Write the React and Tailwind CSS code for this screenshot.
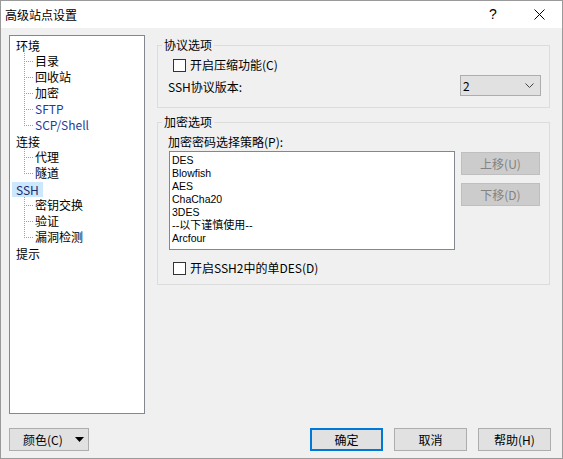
import React from 'react'

const tree = [
  { label: '环境', children: ['目录', '回收站', '加密', 'SFTP', 'SCP/Shell'] },
  { label: '连接', children: ['代理', '隧道'] },
  { label: 'SSH', selected: true, children: ['密钥交换', '验证', '漏洞检测'] },
  { label: '提示', children: [] },
]

const ciphers = ['DES', 'Blowfish', 'AES', 'ChaCha20', '3DES', '--以下谨慎使用--', 'Arcfour']

function CheckBox() {
  return <span className="block w-[13px] h-[13px] border border-[#333333] bg-white shrink-0" />
}

function Connector({ last }) {
  return (
    <svg width="25" height="16" className="shrink-0" shapeRendering="crispEdges">
      <line x1="14.5" y1="0" x2="14.5" y2={last ? 9 : 16} stroke="#a0a0a0" strokeDasharray="1 1" />
      <line x1="16" y1="8.5" x2="24" y2="8.5" stroke="#a0a0a0" strokeDasharray="1 1" />
    </svg>
  )
}

function TreeView() {
  return (
    <div className="w-[136px] h-[379px] border border-[#828790] bg-white pt-[1px]">
      {tree.map((node) => (
        <div key={node.label}>
          <div className="h-[16px] flex items-end">
            <span
              className={`ml-[2px] px-[4px] h-[15px] leading-[15px] text-[12px] ${
                node.selected ? 'bg-[#cce8ff] text-[#1b2a6b]' : ''
              }`}
            >
              {node.label}
            </span>
          </div>
          {node.children.map((child, i) => (
            <div key={child} className="h-[16px] flex items-center">
              <Connector last={i === node.children.length - 1} />
              <span
                className={`text-[12px] leading-[16px] ${
                  child === 'SFTP' || child === 'SCP/Shell' ? 'text-[#1e3c9c]' : ''
                }`}
              >
                {child}
              </span>
            </div>
          ))}
        </div>
      ))}
    </div>
  )
}

function Group({ title, className = '', children }) {
  return (
    <fieldset className={`border border-[#dcdcdc] w-[393px] ${className}`}>
      <legend className="ml-[4px] px-[2px] text-[12px] leading-[16px]">{title}</legend>
      {children}
    </fieldset>
  )
}

function Button({ children, disabled, primary, className = '' }) {
  return (
    <button
      className={`h-[23px] text-[12px] leading-[16px] flex items-center justify-center ${
        disabled
          ? 'bg-[#cccccc] border border-[#bfbfbf] text-[#838383]'
          : primary
          ? 'bg-[#e1e1e1] border-2 border-[#0078d7]'
          : 'bg-[#e1e1e1] border border-[#adadad]'
      } ${className}`}
    >
      {children}
    </button>
  )
}

export default function App() {
  return (
    <div className="w-[563px] h-[459px] flex flex-col border border-[#9a9a9a] bg-[#f0f0f0] text-black font-['Noto_Sans_CJK_SC',sans-serif] select-none">
      {/* title bar */}
      <div className="h-[27px] bg-white flex items-center shrink-0">
        <span className="pl-[4px] text-[12px] leading-[16px]">高级站点设置</span>
        <div className="ml-auto flex h-full">
          <div className="w-[46px] h-full flex items-center justify-center text-[14px] font-['Liberation_Sans',sans-serif]">?</div>
          <div className="w-[46px] h-full flex items-center justify-center">
            <svg width="11" height="11" viewBox="0 0 11 11">
              <path d="M0.5 0.5 L10.5 10.5 M10.5 0.5 L0.5 10.5" stroke="#000" strokeWidth="1" />
            </svg>
          </div>
        </div>
      </div>

      {/* body */}
      <div className="flex-1 flex flex-col pl-[8px] pr-[11px] pt-[7px] pb-[7px]">
        <div className="flex">
          <TreeView />

          <div className="ml-[12px] mt-[2px] flex flex-col">
            <Group title="协议选项">
              <div className="pl-[10px] pr-[8px] pt-[4px] pb-[11px]">
                <div className="h-[16px] flex items-center gap-[4px] ml-[5px]">
                  <CheckBox />
                  <span className="text-[12px] leading-[16px]">开启压缩功能(C)</span>
                </div>
                <div className="mt-[2px] h-[21px] flex items-center justify-between">
                  <span className="text-[12px] leading-[16px] mt-[3px]">SSH协议版本:</span>
                  <div className="w-[81px] h-[21px] bg-[#e1e1e1] border border-[#adadad] flex items-center justify-between pl-[2px] pr-[6px]">
                    <span className="text-[12px] leading-[16px]">2</span>
                    <svg width="9" height="5" viewBox="0 0 9 5">
                      <path d="M0.5 0.5 L4.5 4.5 L8.5 0.5" fill="none" stroke="#444" strokeWidth="1" />
                    </svg>
                  </div>
                </div>
              </div>
            </Group>

            <Group title="加密选项" className="mt-[6px]">
              <div className="pl-[10px] pr-[9px] pt-[4px] pb-[8px]">
                <div className="h-[16px] text-[12px] leading-[16px]">加密密码选择策略(P):</div>
                <div className="mt-[1px] flex">
                  <div className="ml-[1px] w-[286px] h-[99px] border border-[#828790] bg-white pl-[2px] pt-[2px] font-['Liberation_Sans','Noto_Sans_CJK_SC',sans-serif]">
                    {ciphers.map((c) => (
                      <div
                        key={c}
                        className={`h-[13px] leading-[13px] ${c.startsWith('--') ? 'text-[11px]' : 'text-[10.5px]'}`}
                      >
                        {c}
                      </div>
                    ))}
                  </div>
                  <div className="ml-[6px] mt-[1px] flex flex-col gap-[8px]">
                    <Button disabled className="w-[79px]">上移(U)</Button>
                    <Button disabled className="w-[79px]">下移(D)</Button>
                  </div>
                </div>
                <div className="mt-[10px] h-[16px] flex items-center gap-[4px] ml-[5px]">
                  <CheckBox />
                  <span className="text-[12px] leading-[16px]">开启SSH2中的单DES(D)</span>
                </div>
              </div>
            </Group>
          </div>
        </div>

        {/* footer buttons */}
        <div className="mt-[14px] flex items-center">
          <Button className="w-[80px] !justify-between pl-[13px] pr-[4px]">
            <span>颜色(C)</span>
            <svg width="9" height="5" viewBox="0 0 9 5">
              <path d="M0 0 H9 L4.5 5 Z" fill="#000" />
            </svg>
          </Button>
          <div className="ml-auto flex gap-[11px]">
            <Button primary className="w-[73px]">确定</Button>
            <Button className="w-[73px]">取消</Button>
            <Button className="w-[73px]">帮助(H)</Button>
          </div>
        </div>
      </div>
    </div>
  )
}
